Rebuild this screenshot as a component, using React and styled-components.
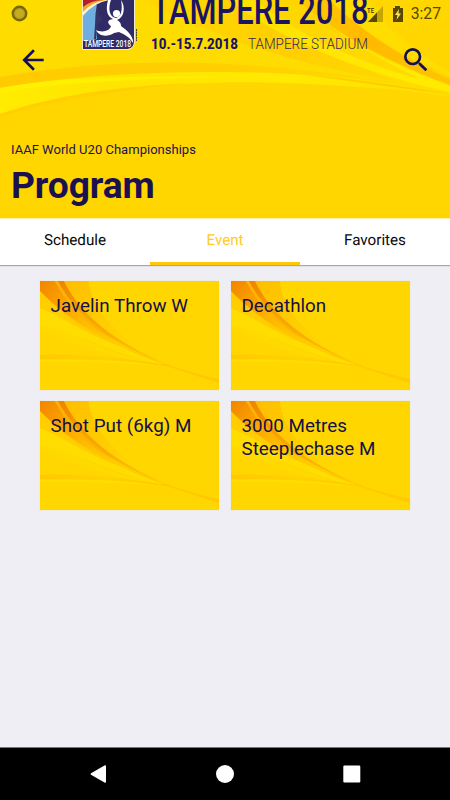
import React from "react";
import styled, { createGlobalStyle } from "styled-components";

const Global = createGlobalStyle`
  * { box-sizing: border-box; }
  body { margin: 0; background: #efeef4; font-family: Roboto, "Liberation Sans", sans-serif; }
  button { font: inherit; border: 0; background: none; padding: 0; margin: 0; }
`;

const Screen = styled.div`
  width: 450px;
  height: 800px;
  display: flex;
  flex-direction: column;
  overflow: hidden;
  background: #efeef4;
`;

const Header = styled.header`
  position: relative;
  height: 218px;
  flex: none;
  display: flex;
  flex-direction: column;
  background: #ffd600;
  color: #1b1150;
`;

const Artwork = styled.svg`
  position: absolute;
  inset: 0;
  width: 100%;
  height: 100%;
`;

const StatusBar = styled.div`
  position: relative;
  height: 27px;
  display: flex;
  align-items: center;
  justify-content: space-between;
  padding: 0 9px 0 11px;
`;

const StatusIcons = styled.div`
  display: flex;
  align-items: center;
`;

const Clock = styled.span`
  font-size: 15.7px;
  line-height: 20px;
  color: #554800;
  margin-left: 6px;
`;

const Toolbar = styled.div`
  position: relative;
  height: 66px;
  display: flex;
  align-items: center;
  justify-content: space-between;
  padding: 0 18px 0 17px;
`;

const IconButton = styled.button`
  width: 32px;
  height: 32px;
  color: #140f58;
  svg { display: block; width: 32px; height: 32px; fill: currentColor; }
`;

const Titles = styled.div`
  position: relative;
  padding: 48px 11px 0;
`;

const Subtitle = styled.div`
  font-size: 13px;
  line-height: 18px;
  letter-spacing: 0.02px;
`;

const Title = styled.h1`
  margin: 4px 0 0;
  font-size: 37.2px;
  line-height: 44px;
  font-weight: 700;
  letter-spacing: -0.1px;
`;

const Tabs = styled.nav`
  flex: none;
  height: 47px;
  display: grid;
  grid-template-columns: repeat(3, 1fr);
  background: #fff;
  border-top: 1px solid #fff0b0;
  box-shadow: 0 1px 1px rgba(0, 0, 0, 0.3);
`;

const Tab = styled.button`
  height: 46px;
  padding-bottom: ${(p) => (p.$active ? 0 : 3)}px;
  font-size: 15.2px;
  line-height: 43px;
  text-rendering: geometricPrecision;
  color: ${(p) => (p.$active ? "#ffca28" : "#080808")};
  border-bottom: ${(p) => (p.$active ? "3px solid #fdc70c" : "0")};
`;

const Grid = styled.main`
  flex: 1;
  display: grid;
  grid-template-columns: 179px 179px;
  grid-auto-rows: 109px;
  gap: 11px 12px;
  align-content: start;
  padding: 16px 40px;
`;

const Card = styled.article`
  position: relative;
  overflow: hidden;
  background: #ffd600;
  box-shadow: 0 0 1px #ecd595;
`;

const CardLabel = styled.div`
  position: relative;
  padding: 14px 10.5px 0;
  font-size: 18.8px;
  line-height: 22.5px;
  letter-spacing: 0.03px;
  color: #14104a;
`;

const NavBar = styled.footer`
  flex: none;
  height: 53px;
  background: #000;
  border-top: 1px solid #77757a;
  display: flex;
  align-items: center;
  justify-content: center;
  gap: 97px;
  svg { width: 30px; height: 30px; fill: #fff; }
`;

function HeaderArtwork() {
  return (
    <Artwork viewBox="0 0 450 218" aria-hidden="true">
      <defs>
        <linearGradient id="ribbon" x1="0" x2="1">
          <stop offset="0" stopColor="#ffec00" />
          <stop offset="0.25" stopColor="#ffe400" />
          <stop offset="0.65" stopColor="#ffea00" />
          <stop offset="1" stopColor="#ffdc00" />
        </linearGradient>
        <linearGradient id="shade" x1="0" x2="1">
          <stop offset="0" stopColor="#ffcb00" />
          <stop offset="0.5" stopColor="#ffd000" />
          <stop offset="1" stopColor="#ffdc00" />
        </linearGradient>
        <linearGradient id="amber" x1="290" y1="0" x2="450" y2="85" gradientUnits="userSpaceOnUse">
          <stop offset="0" stopColor="#ffcd00" />
          <stop offset="0.45" stopColor="#ffb900" />
          <stop offset="1" stopColor="#ffc400" />
        </linearGradient>
        <linearGradient id="glow" x1="200" y1="0" x2="400" y2="85" gradientUnits="userSpaceOnUse">
          <stop offset="0" stopColor="#ffdf00" />
          <stop offset="1" stopColor="#ffea00" />
        </linearGradient>
        <linearGradient id="band" x1="145" y1="0" x2="420" y2="85" gradientUnits="userSpaceOnUse">
          <stop offset="0" stopColor="#ffd800" />
          <stop offset="0.5" stopColor="#ffcf00" />
          <stop offset="1" stopColor="#ffd900" />
        </linearGradient>
        <clipPath id="emblem"><path d="M83 -10H134V43Q134 48 128 49H83Z" /></clipPath>
      </defs>
      <path d="M0 0H310C350 38 398 64 450 84V96C330 70 150 64 0 78Z" fill="#ffdc00" />
      <path d="M142 0C215 38 295 64 400 82C345 62 280 30 240 0Z" fill="url(#band)" />
      <path d="M228 0C285 42 365 74 450 92V86C368 55 320 26 290 0Z" fill="url(#glow)" />
      <path d="M255 0C300 37 365 65 420 79C365 52 325 26 300 0Z" fill="#ffd100" opacity="0.7" />
      <path d="M298 0C337 35 390 63 450 85V79C403 59 357 28 330 0Z" fill="url(#amber)" />
      <path d="M330 0C364 34 407 58 450 76V72C408 49 384 24 368 0Z" fill="#ffdd00" />
      <path d="M0 77C100 60 190 60 270 67C350 74 410 84 450 94V97C340 79 180 67 0 96Z" fill="url(#shade)" />
      <path d="M0 88C105 69 245 69 335 77C380 81 415 87 450 93V95C360 86 270 80 200 83C115 88 53 96 0 115Z" fill="url(#ribbon)" />
      <path d="M0 88C70 75 156 76 225 77C137 79 64 82 0 92Z" fill="#fff300" opacity="0.8" />
      <path d="M0 114C52 96 112 87 189 83C108 92 57 100 0 117Z" fill="#ffcf00" />
      <path d="M300 74C355 79 405 86 450 94C405 89 355 82 300 74Z" fill="#ffc200" opacity="0.7" />
      <g clipPath="url(#emblem)">
        <path d="M82 0H134V50H82Z" fill="#302b64" />
        <path d="M82 14Q93 2 104 0H97V39Q92 41 82 41Z" fill="#70aee0" />
        <path d="M82 0H109Q93 3 82 17Z" fill="#fff4c8" />
        <path d="M82 0H106Q91 2 82 13Z" fill="#f4a229" />
        <path d="M82 0H102Q89 1 82 8Z" fill="#b51c2d" />
        <path d="M97 3L99 15L103 19L98 24L96 39H94L95 25Q95 14 97 3Z" fill="#343466" />
        <path d="M108 0C105 11 108 17 113 19C107 20 107 23 111 26C110 31 102 33 96 30C99 37 108 37 114 33L119 32C126 35 130 38 133 43C134 37 127 30 121 26C121 23 120 22 117 20C124 18 126 7 121 0C123 10 121 17 116 18C109 17 108 8 111 0Z" fill="#fff" />
        <circle cx="116.5" cy="13.5" r="3.6" fill="#fff" />
      </g>
      <path d="M82.5 0V49.5H128Q134.5 48 134.5 41V0" fill="none" stroke="#eee9ca" strokeWidth="1" />
      <text x="84" y="47.3" fill="#fff" fontFamily="Roboto, sans-serif" fontSize="8.6" fontWeight="500" textLength="47" lengthAdjust="spacingAndGlyphs">TAMPERE 2018</text>
      <path d="M136.5 29V41" stroke="#443e2d" strokeWidth="1" strokeDasharray="2 0.6" />
      <text x="151.5" y="24" fill="#1b1464" fontFamily="Roboto, sans-serif" fontSize="41" fontWeight="500" textLength="217" lengthAdjust="spacingAndGlyphs">TAMPERE 2018</text>
      <text x="151" y="49" fill="#1b1464" fontFamily="Roboto, sans-serif" fontSize="13.8" fontWeight="800" textLength="87" lengthAdjust="spacingAndGlyphs">10.-15.7.2018</text>
      <text x="248" y="49" fill="#302860" fontFamily="Roboto, sans-serif" fontSize="13.8" fontWeight="300" textLength="120" lengthAdjust="spacingAndGlyphs">TAMPERE STADIUM</text>
    </Artwork>
  );
}

function CardArtwork({ id }) {
  return (
    <Artwork viewBox="0 0 180 109" preserveAspectRatio="none" aria-hidden="true">
      <defs>
        <linearGradient id={`${id}-flame`} x1="0" y1="0" x2="85" y2="70" gradientUnits="userSpaceOnUse">
          <stop offset="0" stopColor="#f28500" />
          <stop offset="0.25" stopColor="#fa9f00" />
          <stop offset="0.6" stopColor="#ffbf00" />
          <stop offset="1" stopColor="#ffce00" />
        </linearGradient>
        <linearGradient id={`${id}-veil`} x1="15" y1="0" x2="95" y2="65" gradientUnits="userSpaceOnUse">
          <stop offset="0" stopColor="#ffbc00" />
          <stop offset="0.55" stopColor="#ffcb00" />
          <stop offset="1" stopColor="#ffd600" />
        </linearGradient>
        <linearGradient id={`${id}-streak`} x1="18" y1="0" x2="130" y2="84" gradientUnits="userSpaceOnUse">
          <stop offset="0" stopColor="#ef8200" />
          <stop offset="0.3" stopColor="#f6a200" />
          <stop offset="1" stopColor="#ffc900" />
        </linearGradient>
        <linearGradient id={`${id}-base`} x1="0" x2="1">
          <stop offset="0" stopColor="#ffca00" />
          <stop offset="0.5" stopColor="#ffd100" />
          <stop offset="1" stopColor="#ffc400" />
        </linearGradient>
      </defs>
      <path d="M0 10C36 41 80 70 145 88C90 82 45 52 0 46Z" fill="#ffdd00" />
      <path d="M0 8C24 29 58 52 98 70C61 62 34 42 0 27Z" fill="#ffcd00" />
      <path d="M0 44C28 48 61 70 100 79C60 75 30 59 0 48Z" fill="#ffda00" />
      <path d="M0 0H49C52 26 70 47 99 65C75 59 35 36 0 8Z" fill={`url(#${id}-veil)`} />
      <path d="M0 0H15C37 37 65 55 120 81C73 66 29 40 0 10Z" fill={`url(#${id}-flame)`} />
      <path d="M15 0H18C35 28 51 44 80 61C48 47 28 25 15 0Z" fill="#ffb200" />
      <path d="M18 0H24C40 32 72 61 133 85C82 68 40 41 18 0Z" fill={`url(#${id}-streak)`} />
      <path d="M0 74C44 72 94 78 137 86C94 83 44 77 0 78Z" fill={`url(#${id}-base)`} />
      <path d="M0 79C53 77 94 80 133 86C91 83 47 80 0 81Z" fill="#ffdd00" />
      <path d="M85 67C116 80 147 91 180 98V102C148 92 117 82 85 67Z" fill="#ffc400" opacity="0.8" />
    </Artwork>
  );
}

const events = ["Javelin Throw W", "Decathlon", "Shot Put (6kg) M", "3000 Metres Steeplechase M"];
const tabs = ["Schedule", "Event", "Favorites"];

export default function App() {
  return (
    <>
      <Global />
      <Screen>
        <Header>
          <HeaderArtwork />
          <StatusBar>
            <svg width="18" height="18" viewBox="0 0 18 18">
              <circle cx="8.5" cy="8.5" r="6.7" fill="#b7a21a" stroke="#766900" strokeWidth="2.4" />
              <circle cx="8.5" cy="8.5" r="4" fill="#c5ad22" />
            </svg>
            <StatusIcons>
              <svg width="38" height="20" viewBox="0 0 38 20">
                <text x="0" y="9" fontFamily="Roboto, sans-serif" fontSize="8" fontWeight="500" fill="#383000" textLength="7" lengthAdjust="spacingAndGlyphs">TE</text>
                <path d="M16 2V18H1Z" fill="#c5a600" />
                <path d="M10 8.4V18H1Z" fill="#554800" />
                <path d="M28 2H33V4H36V18H26V4H28Z" fill="#554800" />
                <path d="M32 5L28 11H30.5L29.5 16L34 9.5H31.5Z" fill="#ffe15d" />
              </svg>
              <Clock>3:27</Clock>
            </StatusIcons>
          </StatusBar>
          <Toolbar>
            <IconButton aria-label="Back">
              <svg viewBox="0 0 24 24"><path d="M20 11H7.8l5.6-5.6L12 4l-8 8 8 8 1.4-1.4L7.8 13H20z" /></svg>
            </IconButton>
            <IconButton aria-label="Search">
              <svg viewBox="0 0 24 24"><path d="M15.5 14h-.79l-.28-.27A6.47 6.47 0 0 0 16 9.5 6.5 6.5 0 1 0 9.5 16c1.61 0 3.09-.59 4.23-1.57l.27.28v.79l5 4.99L20.49 19zm-6 0a4.5 4.5 0 1 1 0-9 4.5 4.5 0 0 1 0 9z" /></svg>
            </IconButton>
          </Toolbar>
          <Titles>
            <Subtitle>IAAF World U20 Championships</Subtitle>
            <Title>Program</Title>
          </Titles>
        </Header>
        <Tabs>
          {tabs.map((name) => <Tab key={name} $active={name === "Event"}>{name}</Tab>)}
        </Tabs>
        <Grid>
          {events.map((name, i) => (
            <Card key={name}>
              <CardArtwork id={`card-${i}`} />
              <CardLabel>{name}</CardLabel>
            </Card>
          ))}
        </Grid>
        <NavBar>
          <svg viewBox="0 0 30 30"><path d="M8 14.2L21.5 6.4Q23 5.8 23 7.2V22.8Q23 24.2 21.5 23.6L8 15.8Q7 15 8 14.2Z" /></svg>
          <svg viewBox="0 0 30 30"><circle cx="15" cy="15" r="9" /></svg>
          <svg viewBox="0 0 30 30"><rect x="6.3" y="6.5" width="17" height="17" rx="1.2" /></svg>
        </NavBar>
      </Screen>
    </>
  );
}
